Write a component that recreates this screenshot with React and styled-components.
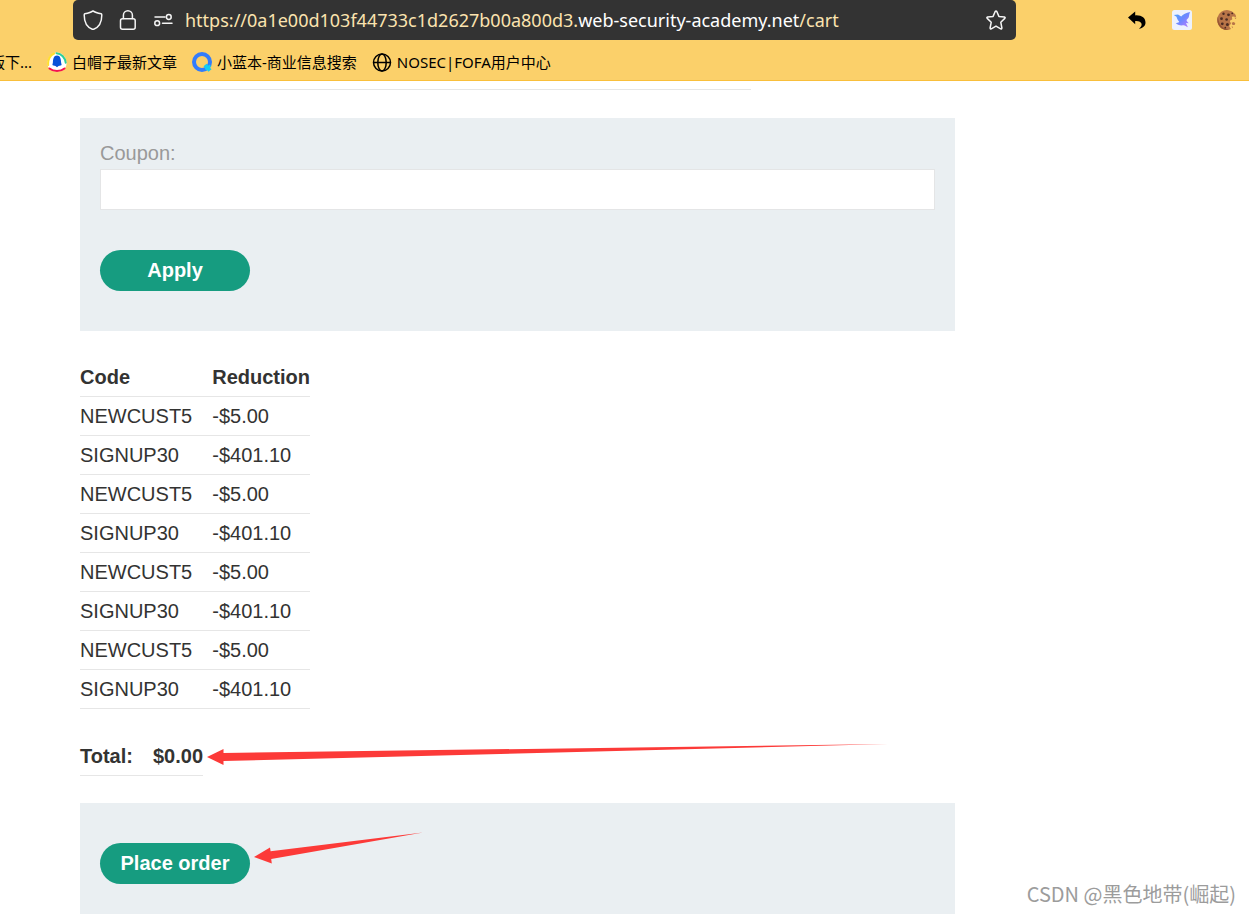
import React from 'react';
import styled, { createGlobalStyle } from 'styled-components';

const GlobalStyle = createGlobalStyle`
  * {
    box-sizing: border-box;
  }
  body {
    margin: 0;
    background-color: #FFFFFF;
    color: #333332;
    font-family: "Liberation Sans", Arial, sans-serif;
    font-size: 20px;
  }
`;

const Page = styled.div`
  position: relative;
  height: 100vh;
  overflow: hidden;
`;

const Browser = styled.header`
  background-color: #FBD06A;
  border-bottom: 1px solid #F9BF3B;
  font-family: "Noto Sans", "Noto Sans CJK SC", sans-serif;
`;

const Toolbar = styled.div`
  display: flex;
  align-items: center;
  height: 40px;
  padding: 0 12px 0 73px;
`;

const AddressBar = styled.div`
  display: flex;
  flex: 1;
  align-items: center;
  gap: 12px;
  height: 40px;
  margin-right: 111px;
  padding: 0 10px;
  border-radius: 5px;
  background-color: #333333;
  color: #F5F5F5;
`;

const SiteInfo = styled.div`
  display: flex;
  gap: 15px;
`;

const Url = styled.div`
  flex: 1;
  min-width: 0;
  overflow: hidden;
  white-space: nowrap;
  font-size: 18px;
  line-height: 40px;
  color: #FBE3AF;
`;

const Domain = styled.span`
  color: #FFFFFF;
`;

const IconButton = styled.button`
  display: flex;
  padding: 0;
  border: 0 none;
  background: none;
  color: inherit;
  cursor: pointer;
`;

const Extensions = styled.div`
  display: flex;
  gap: 25px;
`;

const Bookmarks = styled.nav`
  display: flex;
  align-items: center;
  gap: 15px;
  height: 40px;
  padding-top: 4px;
`;

const Bookmark = styled.a`
  display: flex;
  align-items: center;
  gap: 5px;
  white-space: nowrap;
  font-size: 15px;
  line-height: 22px;
  color: #000000;
  text-decoration: none;
`;

const CutBookmark = styled(Bookmark)`
  justify-content: flex-end;
  width: 32px;
  overflow: hidden;
`;

const Cart = styled.main`
  max-width: 955px;
  padding-left: 80px;
`;

const Rule = styled.hr`
  width: 671px;
  max-width: 100%;
  margin: 8px 0 28px;
  border: 0 none;
  border-top: 1px solid #E6E6E6;
`;

const Panel = styled.form`
  position: relative;
  margin-top: 27px;
  padding: ${props => props.$top} 20px 40px;
  background-color: #EAEFF2;
`;

const Label = styled.label`
  display: block;
  line-height: 31px;
  color: #999999;
`;

const CouponInput = styled.input`
  display: block;
  width: 100%;
  height: 41px;
  margin-bottom: 40px;
  padding: 0 10px;
  border: 1px solid #E4E5E6;
  background-color: #FFFFFF;
  font: inherit;
`;

const Button = styled.button`
  display: block;
  width: 150px;
  height: 41px;
  padding: 0;
  border: 0 none;
  border-radius: 21px;
  background-color: #169C80;
  color: #FFFFFF;
  font: inherit;
  font-weight: bold;
  cursor: pointer;
`;

const Table = styled.table`
  margin: 27px 0 28px;
  border-collapse: separate;
  border-spacing: 0;
  th,
  td {
    height: 39px;
    padding: 0 20px 0 0;
    border-bottom: 1px solid #E6E6E6;
    text-align: left;
    line-height: 38px;
  }
  th:last-child,
  td:last-child {
    padding-right: 0;
  }
`;

const Total = styled.div`
  position: relative;
  margin-bottom: 27px;
  ${Table} {
    margin: 0;
  }
`;

const TotalArrow = styled.svg`
  position: absolute;
  top: 5px;
  left: 127px;
`;

const OrderArrow = styled.svg`
  position: absolute;
  top: 28px;
  left: 174px;
`;

const Watermark = styled.div`
  position: absolute;
  right: 13px;
  bottom: 5px;
  font-family: "Noto Sans CJK SC", sans-serif;
  font-size: 20px;
  line-height: 30px;
  color: #9C9C9C;
`;

const strokes = { fill: 'none', stroke: 'currentColor', strokeWidth: 1.5, strokeLinecap: 'round', strokeLinejoin: 'round' };

const ShieldIcon = () => (
  <svg width="20" height="20" viewBox="0 0 20 20" {...strokes}>
    <path d="M10 .9C8 2.5 4.800 3.300 1.800 3.800 1.300 4 1.200 4.400 1.200 5c0 6.500 2.200 12 8.100 14.200.5.200.9.200 1.400 0C16.600 17 18.800 11.500 18.800 5c0-.6-.1-1-.6-1.200C15.200 3.300 12 2.500 10 .9z" />
  </svg>
);

const LockIcon = () => (
  <svg width="20" height="20" viewBox="0 0 20 20" {...strokes}>
    <rect x="2.500" y="8.700" width="14.700" height="10.500" rx="2" />
    <path d="M5.400 8.500V5.300a4.500 4.500 0 0 1 9 0v3.200" />
  </svg>
);

const PermissionsIcon = () => (
  <svg width="20" height="20" viewBox="0 0 20 20" {...strokes}>
    <path d="M2 7h10M9.500 13.200H19" />
    <circle cx="15.800" cy="7" r="2.400" />
    <circle cx="4.200" cy="13.200" r="2.400" />
  </svg>
);

const StarIcon = () => (
  <svg width="20" height="20" viewBox="0 0 20 20" {...strokes}>
    <path d="M9.200 1.500q.8-1.200 1.600 0l2.100 4.900 5.500.6q1.200.4.400 1.400l-4 3.900 1.100 5.700q0 1.200-1.200.8L10 16.100l-4.700 2.700q-1.200.4-1.200-.8l1.100-5.700-4-3.900Q.4 7.400 1.600 7l5.500-.6z" />
  </svg>
);

const UndoIcon = () => (
  <svg width="20" height="20" viewBox="0 0 20 20">
    <path d="M1 7.500 8.200 1.500V5.400C14.800 5 18.500 8 18.500 12.600c0 3.200-2.200 5.600-6.600 6.200 4.600-3.300 3.600-8.200-3.700-7.800v3.200z" />
  </svg>
);

const BirdIcon = () => (
  <svg width="20" height="20" viewBox="0 0 20 20">
    <defs>
      <linearGradient id="wing" x1="0" y1="0" x2="1" y2="1">
        <stop offset="0" stopColor="#4AA5F8" />
        <stop offset=".5" stopColor="#6C88FF" />
        <stop offset="1" stopColor="#C27AFF" />
      </linearGradient>
    </defs>
    <rect width="20" height="20" rx="2.500" fill="#EDF2FD" />
    <path fill="url(#wing)" d="M1.800 4.900 6 4.600 9.200 6.600C11 4.300 14 3 18.200 2c-1 2-1 3.200-1.300 4.800-.3 1.500-1.600 2.200-2.400 3.200.2 1.400 1.200 2.200 2.300 3.200l-2.800-.1 1.900 4.200c-1.600-.7-2.900-1.900-4.300-2-3.500.6-6.500-.6-7.800-2.400 2.200.1 3-.3 3.400-1.100C5.700 10.200 5 8.600 4.500 6.800z" />
  </svg>
);

const CookieIcon = () => (
  <svg width="20" height="20" viewBox="0 0 20 20">
    <path fill="#B87548" d="M17.500 3.500A9.900 9.900 0 1 0 14 19c-1-1.400-1.800-2.300-1.600-3.300.2-1.200 1.600-1.200 1.500-2.400-.1-1.100-1.300-1.400-.9-2.400.4-1.100 1.900-.6 2.200-1.600.3-1-.6-1.500-.1-2.300.5-.8 2-.5 3.700.2.400-1.300-.2-2.700-1.300-3.700z" />
    <path fill="#985633" d="M1 6.500C-1.700 14.500 5 21.500 12 19.700 5 18.500 1.500 14 1 6.500z" />
    <g fill="#4C2B22">
      <circle cx="6.500" cy="3.700" r="1.200" />
      <circle cx="11.500" cy="4.800" r="1.400" />
      <circle cx="15.200" cy="3.300" r=".9" />
      <circle cx="4.500" cy="8.700" r="1.400" />
      <circle cx="9.600" cy="9.500" r="1.300" />
      <circle cx="5.300" cy="13.800" r="1.400" />
      <circle cx="10.400" cy="14.500" r="1.500" />
      <circle cx="8.300" cy="17.700" r=".9" />
    </g>
    <path fill="#B87548" d="m14.600 12.700 2.200-.7 1.500 1.200-.7 1.700-2.100.2zM17.300 7.700l2.200 0-.8 1.300zM14.500 16.600l1.500.2-.5 1.400z" />
  </svg>
);

const HatIcon = () => (
  <svg width="20" height="20" viewBox="0 0 20 20">
    <path fill="#FFFFFF" d="M10 .5c6 0 9.500 6 9.500 11s-4 8-9.500 8-9.500-3-9.500-8 3.500-11 9.500-11z" />
    <g fill="none" strokeWidth="2" strokeLinecap="round">
      <path stroke="#FFE02E" d="M1.200 13C.6 8 3 3 7.200 1.500" />
      <path stroke="#2ECF9B" d="M9.500 1.200c5 .4 8.600 4.500 9.200 9.500" />
      <path stroke="#F5124F" d="M2.500 16.500c4 3.300 11 3.300 15 0" />
    </g>
    <path fill="#0752D9" d="M10 3.500c3.300 0 4 3.500 4.100 7l.5 2.300c0 .7-1.800 1.100-3.100 1.100L10 15.200l-1.500-1.300c-1.300 0-3.100-.4-3.100-1.100l.5-2.300c.1-3.500.8-7 4.100-7z" />
  </svg>
);

const SearchIcon = () => (
  <svg width="20" height="20" viewBox="0 0 20 20">
    <circle cx="10" cy="10" r="8" fill="none" stroke="#327CFB" strokeWidth="4" />
    <path stroke="#12CDF5" strokeWidth="4" d="m13 13 5 5.500" />
    <path stroke="#12CDF5" strokeWidth="2.500" d="m13.500 17.500 5-4" />
  </svg>
);

const GlobeIcon = () => (
  <svg width="20" height="20" viewBox="0 0 20 20" fill="none" stroke="#000000" strokeWidth="1.500">
    <circle cx="10" cy="10.500" r="8.500" />
    <ellipse cx="10" cy="10.500" rx="4.200" ry="8.500" />
    <path d="M1.500 10.500h17" />
  </svg>
);

const coupons = [
  { code: 'NEWCUST5', reduction: '-$5.00' },
  { code: 'SIGNUP30', reduction: '-$401.10' },
  { code: 'NEWCUST5', reduction: '-$5.00' },
  { code: 'SIGNUP30', reduction: '-$401.10' },
  { code: 'NEWCUST5', reduction: '-$5.00' },
  { code: 'SIGNUP30', reduction: '-$401.10' },
  { code: 'NEWCUST5', reduction: '-$5.00' },
  { code: 'SIGNUP30', reduction: '-$401.10' },
];

const stop = e => e.preventDefault();

const App = () => (
  <Page>
    <GlobalStyle />
    <Browser>
      <Toolbar>
        <AddressBar>
          <SiteInfo>
            <IconButton aria-label="Tracking protection"><ShieldIcon /></IconButton>
            <IconButton aria-label="Connection security"><LockIcon /></IconButton>
            <IconButton aria-label="Permissions"><PermissionsIcon /></IconButton>
          </SiteInfo>
          <Url>
            https://0a1e00d103f44733c1d2627b00a800d3.<Domain>web-security-academy.net</Domain>/cart
          </Url>
          <IconButton aria-label="Bookmark this page"><StarIcon /></IconButton>
        </AddressBar>
        <Extensions>
          <IconButton aria-label="Undo"><UndoIcon /></IconButton>
          <IconButton aria-label="Bird"><BirdIcon /></IconButton>
          <IconButton aria-label="Cookies"><CookieIcon /></IconButton>
        </Extensions>
      </Toolbar>
      <Bookmarks>
        <CutBookmark href="#">版下...</CutBookmark>
        <Bookmark href="#"><HatIcon />白帽子最新文章</Bookmark>
        <Bookmark href="#"><SearchIcon />小蓝本-商业信息搜索</Bookmark>
        <Bookmark href="#"><GlobeIcon />NOSEC|FOFA用户中心</Bookmark>
      </Bookmarks>
    </Browser>
    <Cart>
      <Rule />
      <Panel $top="20px" onSubmit={stop}>
        <Label htmlFor="coupon">Coupon:</Label>
        <CouponInput id="coupon" type="text" name="coupon" />
        <Button type="submit">Apply</Button>
      </Panel>
      <Table>
        <thead>
          <tr>
            <th>Code</th>
            <th>Reduction</th>
          </tr>
        </thead>
        <tbody>
          {coupons.map((coupon, i) => (
            <tr key={i}>
              <td>{coupon.code}</td>
              <td>{coupon.reduction}</td>
            </tr>
          ))}
        </tbody>
      </Table>
      <Total>
        <Table>
          <tbody>
            <tr>
              <th>Total:</th>
              <th>$0.00</th>
            </tr>
          </tbody>
        </Table>
        <TotalArrow width="684" height="26" viewBox="0 0 684 26">
          <path fill="#FC3A38" d="M0 15 16.500 7v4L681 2 16.500 19v4z" />
        </TotalArrow>
      </Total>
      <Panel $top="40px" onSubmit={stop}>
        <Button type="submit">Place order</Button>
        <OrderArrow width="172" height="36" viewBox="0 0 172 36">
          <path fill="#FC3A38" d="M0 26 16 16.500l.6 3.800L169 1.500 17.200 28l.6 4.500z" />
        </OrderArrow>
      </Panel>
    </Cart>
    <Watermark>CSDN @黑色地带(崛起)</Watermark>
  </Page>
);

export default App;
